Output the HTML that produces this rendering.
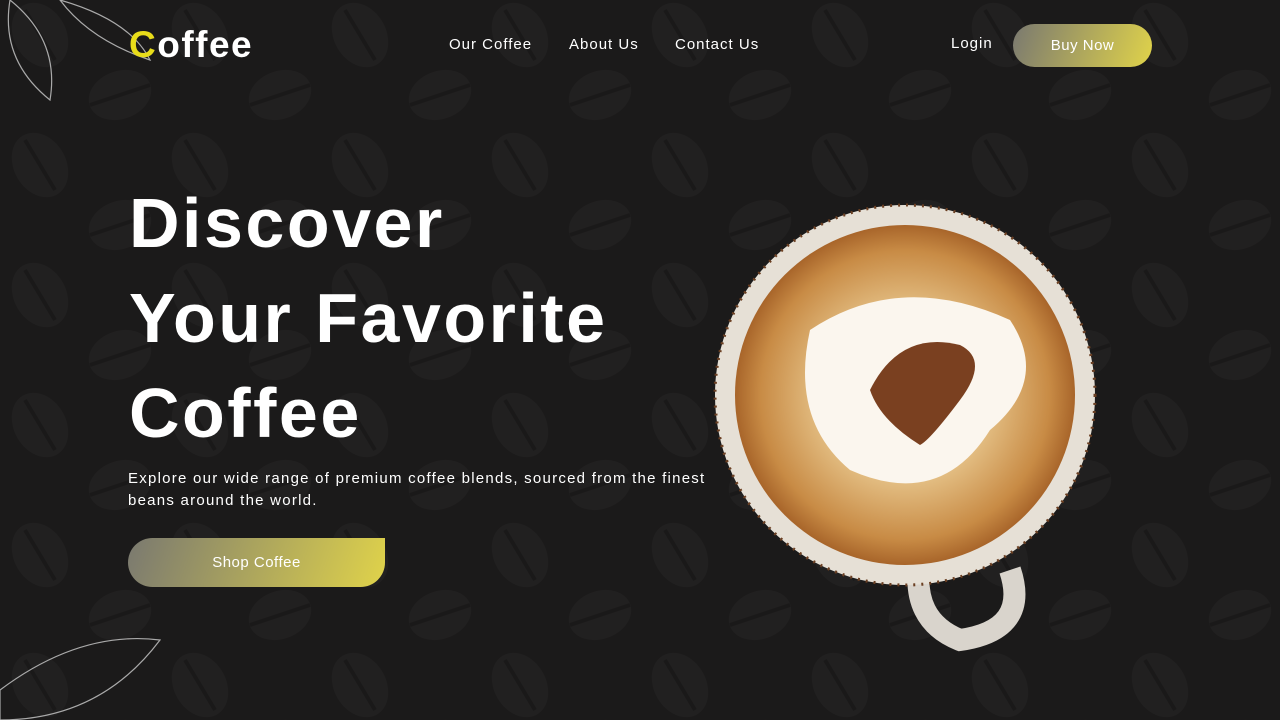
<!DOCTYPE html>
<html><head><meta charset="utf-8"><style>
*{margin:0;padding:0;box-sizing:border-box}
body{width:1280px;height:720px;overflow:hidden;background:#1b1a1a;font-family:"Liberation Sans",sans-serif;color:#fff;position:relative}
.bg{position:absolute;inset:0}
.logo{position:absolute;left:129px;top:24px;font-size:37px;font-weight:bold;letter-spacing:1.5px}
.logo span{color:#e8dc1a}
.nav{position:absolute;top:36px;font-size:15px;letter-spacing:1px}
.btn{position:absolute;background:linear-gradient(110deg,#7a7970,#e0d34a);color:#fff;display:flex;align-items:center;justify-content:center;font-size:15px;letter-spacing:0.5px}
h1{position:absolute;left:129px;top:176px;font-size:70px;line-height:95px;font-weight:bold;letter-spacing:2.5px}
p{position:absolute;left:128px;top:468px;font-size:15px;line-height:22px;width:600px;letter-spacing:1.25px}
</style></head><body>
<svg class="bg" width="1280" height="720">
<defs><pattern id="p" width="160" height="130" patternUnits="userSpaceOnUse">
<g fill="#212020"><ellipse cx="40" cy="35" rx="26" ry="34" transform="rotate(-30 40 35)"/><ellipse cx="120" cy="95" rx="32" ry="24" transform="rotate(-20 120 95)"/></g>
<g stroke="#1a1919" stroke-width="4"><line x1="25" y1="10" x2="55" y2="60"/><line x1="90" y1="105" x2="150" y2="85"/></g>
</pattern>
<radialGradient id="foam" cx="50%" cy="50%" r="50%"><stop offset="0" stop-color="#f4e7d2"/><stop offset="0.45" stop-color="#e8c78e"/><stop offset="0.85" stop-color="#c88b45"/><stop offset="1" stop-color="#a8652a"/></radialGradient>
</defs>
<rect width="1280" height="720" fill="url(#p)"/>
<g stroke="#aaa" fill="none" stroke-width="1.2"><path d="M10 0 Q60 40 50 100 Q0 60 10 0Z"/><path d="M60 0 Q130 20 150 60 Q90 40 60 0Z"/><path d="M0 690 Q80 630 160 640 Q100 720 0 720Z"/></g>
<path d="M920 560 Q910 620 960 640 Q1030 630 1010 570" stroke="#d9d4cc" stroke-width="22" fill="none"/>
<circle cx="905" cy="395" r="190" fill="#e6e0d6"/>
<circle cx="905" cy="395" r="190" fill="none" stroke="#6b3f22" stroke-width="3" stroke-dasharray="2 6"/>
<circle cx="905" cy="395" r="170" fill="url(#foam)"/>
<path d="M810 330 Q900 270 1010 320 Q1050 380 990 430 Q940 510 850 470 Q790 420 810 330Z" fill="#fbf6ee"/>
<path d="M870 390 Q900 330 960 345 Q990 360 960 400 Q930 440 920 445 Q880 420 870 390Z" fill="#7a4020"/>
</svg>
<div class="logo"><span>C</span>offee</div>
<div class="nav" style="left:449px">Our Coffee</div>
<div class="nav" style="left:569px">About Us</div>
<div class="nav" style="left:675px">Contact Us</div>
<div class="nav" style="left:951px;top:35px">Login</div>
<div class="btn" style="left:1013px;top:24px;width:139px;height:43px;border-radius:22px">Buy Now</div>
<h1>Discover<br>Your Favorite<br>Coffee</h1>
<p>Explore our wide range of premium coffee blends, sourced from the finest beans around the world.</p>
<div class="btn" style="left:128px;top:538px;width:257px;height:49px;border-radius:25px 0 25px 25px">Shop Coffee</div>
</body></html>
